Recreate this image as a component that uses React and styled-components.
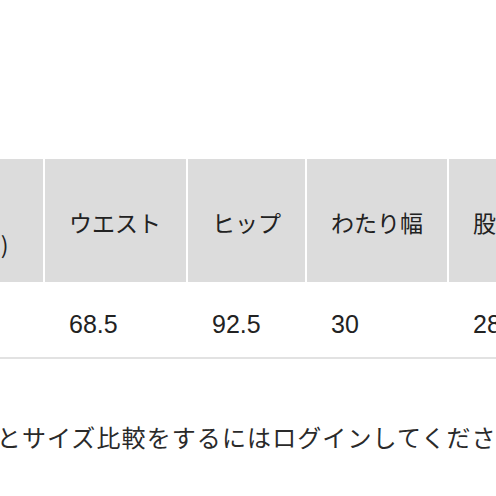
import styled, { createGlobalStyle } from 'styled-components'

const Global = createGlobalStyle`
  html, body {
    margin: 0;
    padding: 0;
    background: #fff;
    overflow: hidden;
  }
  body {
    font-family: "Noto Sans CJK JP", "Noto Sans", sans-serif;
    color: #222;
  }
`

const Page = styled.div`
  width: 496px;
  height: 496px;
  overflow: hidden;
  padding-top: 159px;
  box-sizing: border-box;
`

const Table = styled.div`
  margin-left: -110px;
  width: max-content;
`

const Row = styled.div`
  display: grid;
  grid-template-columns: 153px 141px 117px 140px 140px;
  column-gap: 2px;
  border-bottom: ${(p) => (p.$head ? 'none' : '2px solid #e2e2e2')};
`

const Cell = styled.div`
  box-sizing: border-box;
  display: flex;
  align-items: center;
  padding: ${(p) => (p.$head ? '5px 24px 0' : '8px 24px 0')};
  height: ${(p) => (p.$head ? '123px' : '75px')};
  background: ${(p) => (p.$head ? '#dcdcdc' : '#fff')};
  font-family: ${(p) =>
    p.$head ? '"Noto Sans CJK JP", sans-serif' : '"Liberation Sans", Arial, sans-serif'};
  font-size: ${(p) => (p.$head ? '23px' : '25px')};
  line-height: ${(p) => (p.$head ? 1.9 : 1.2)};
  color: #222;
  white-space: nowrap;
`

const Notice = styled.p`
  margin: 60px 0 0 -128px;
  font-size: 24px;
  line-height: 36px;
  letter-spacing: 1.1px;
  color: #2a2a2a;
  white-space: nowrap;
`

const heads = [
  <>サイズ<br />単位(cm)</>,
  'ウエスト',
  'ヒップ',
  'わたり幅',
  '股下',
]
const values = ['M', '68.5', '92.5', '30', '28']

export default function App() {
  return (
    <Page>
      <Global />
      <Table>
        <Row $head>
          {heads.map((h, i) => (
            <Cell $head key={i}>
              <span>{h}</span>
            </Cell>
          ))}
        </Row>
        <Row>
          {values.map((v, i) => (
            <Cell key={i}>{v}</Cell>
          ))}
        </Row>
      </Table>
      <Notice>マイサイズとサイズ比較をするにはログインしてください</Notice>
    </Page>
  )
}
